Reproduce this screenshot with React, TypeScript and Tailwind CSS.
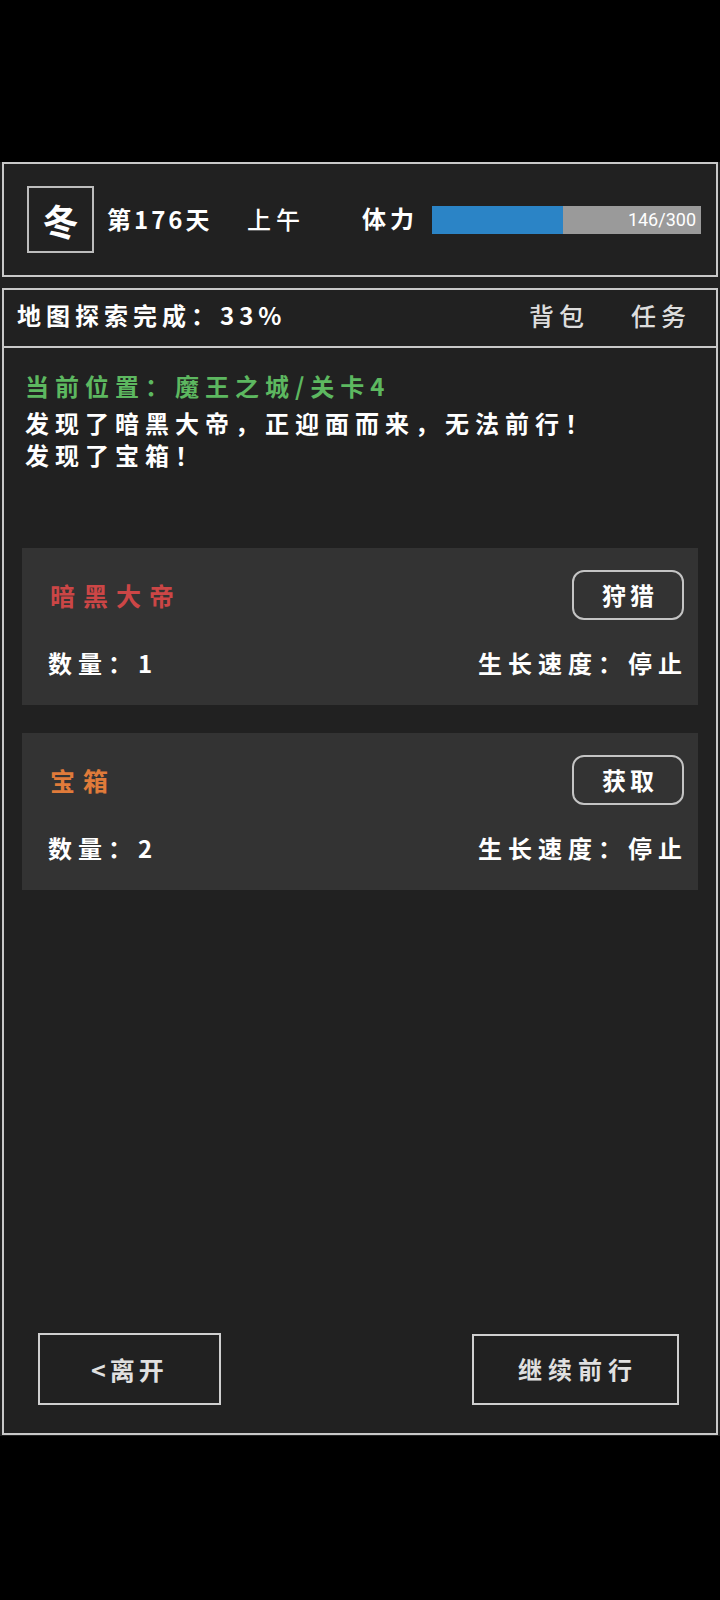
import React from "react";

const F = { fontFamily: '"Noto Sans CJK SC", "Noto Sans", sans-serif' };

function Card({
  title,
  titleColor,
  action,
  count,
}: {
  title: string;
  titleColor: string;
  action: string;
  count: string;
}) {
  return (
    <div className="ml-[18px] mr-[18px] bg-[#333333] h-[157px] flex flex-col">
      <div className="mt-[22px] h-[50px] flex items-center justify-between pl-[28px] pr-[14px]">
        <span className={`text-[25px] leading-[32px] tracking-[8px] font-bold ${titleColor}`}>{title}</span>
        <button className="w-[112px] h-[50px] rounded-[12px] border-2 border-[#c4c4c4] bg-transparent flex items-center justify-center pl-[4px] text-white text-[24px] font-bold tracking-[4px] leading-none">
          {action}
        </button>
      </div>
      <div className="mt-[27px] h-[32px] flex items-center justify-between pl-[26px] pr-[10px] text-white font-bold text-[24px] leading-[32px] tracking-[6px]">
        <span>数量：{count}</span>
        <span>生长速度：停止</span>
      </div>
    </div>
  );
}

export default function App() {
  return (
    <div className="w-[720px] h-[1600px] bg-black overflow-hidden" style={F}>
      <div className="mt-[162px] h-[1274px] bg-[#212121] px-[2px] flex flex-col">
        {/* top status panel */}
        <div className="h-[115px] border-2 border-[#c8c8c8] flex items-center pl-[23px]">
          <div className="w-[67px] h-[67px] border-2 border-[#bdbdbd] flex items-center justify-center text-white text-[36px] font-bold leading-none">
            冬
          </div>
          <div className="ml-[13px] w-[140px] text-white text-[24px] font-bold tracking-[3px] leading-none -mt-[2px]">
            第176天
          </div>
          <div className="w-[115px] text-white text-[24px] font-medium tracking-[5px] leading-none -mt-[2px]">
            上午
          </div>
          <div className="w-[70px] text-white text-[24px] font-bold tracking-[4px] leading-none -mt-[4px]">
            体力
          </div>
          <div className="relative w-[269px] h-[28px] bg-[#9a9a9a]">
            <div className="absolute left-0 top-0 h-full bg-[#2b84c6]" style={{ width: `${(146 / 300) * 100}%` }} />
            <div
              className="absolute right-[5px] top-0 h-full flex items-center text-white text-[18px] leading-none"
              style={{ fontFamily: 'Roboto, "Noto Sans", sans-serif' }}
            >
              146/300
            </div>
          </div>
        </div>

        {/* main panel */}
        <div className="mt-[11px] border-2 border-[#c8c8c8] flex flex-col flex-1 mb-[1px]">
          <div className="h-[58px] border-b-2 border-[#c8c8c8] flex items-center pl-[13px] pr-[25px] pb-[6px]">
            <span className="text-white text-[24px] font-bold tracking-[5px] leading-none">地图探索完成：33%</span>
            <span className="ml-auto text-[#dddddd] text-[25px] font-medium tracking-[5px] leading-none">背包</span>
            <span className="ml-[42px] text-[#dddddd] text-[25px] font-medium tracking-[5px] leading-none">任务</span>
          </div>

          <div className="flex flex-col flex-1">
            <div className="pt-[22px] pl-[21px] text-[24px] font-bold tracking-[6px] leading-[32px]">
              <div className="text-[#5db860]">当前位置：魔王之城/关卡4</div>
              <div className="mt-[5px] text-white">发现了暗黑大帝，正迎面而来，无法前行！</div>
              <div className="text-white">发现了宝箱！</div>
            </div>

            <div className="mt-[77px]">
              <Card title="暗黑大帝" titleColor="text-[#cc4646]" action="狩猎" count="1" />
            </div>
            <div className="mt-[28px]">
              <Card title="宝箱" titleColor="text-[#e07b3a]" action="获取" count="2" />
            </div>

            <div className="flex-1" />

            <div className="flex items-center justify-between pl-[34px] pr-[37px] pb-[28px]">
              <button className="w-[183px] h-[72px] border-2 border-[#cfcfcf] flex items-center justify-center text-[#e0e0e0] text-[25px] font-bold tracking-[4px] leading-none">
                &lt;离开
              </button>
              <button className="w-[207px] h-[71px] border-2 border-[#cfcfcf] flex items-center justify-center pl-[5px] text-[#e0e0e0] text-[24px] font-bold tracking-[6px] leading-none">
                继续前行
              </button>
            </div>
          </div>
        </div>
      </div>
    </div>
  );
}
